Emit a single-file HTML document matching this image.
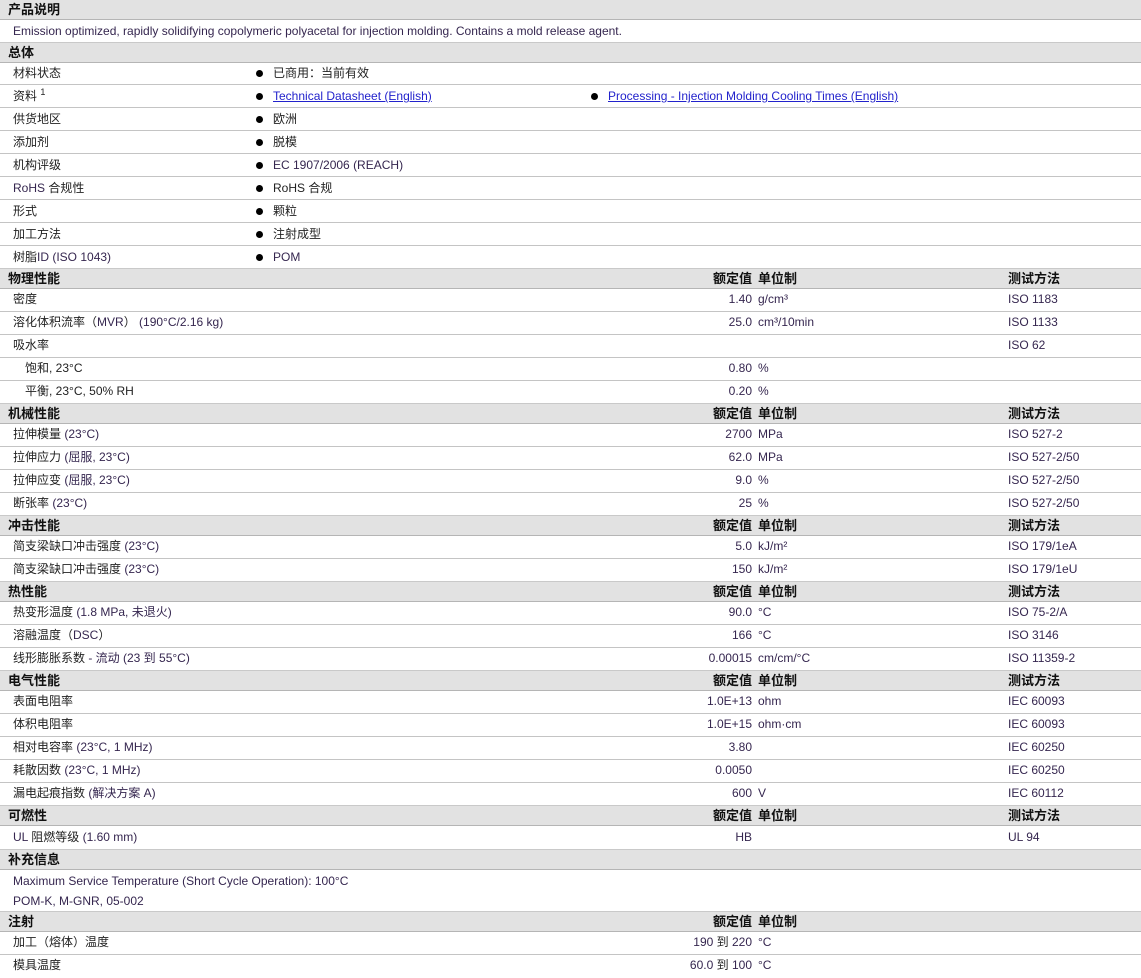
<!DOCTYPE html>
<html><head><meta charset="utf-8"><style>
*{margin:0;padding:0;box-sizing:border-box}
body{width:1141px;height:978px;background:#fff;font-family:"Liberation Sans","Noto Sans CJK SC",sans-serif;font-size:12px;color:#222;position:relative;overflow:hidden}
.row{position:absolute;left:0;width:1141px;border-bottom:1px solid #c4c4c4}
.h{background:#e2e2e2;border-top:1px solid #c9c9c9;border-bottom:1px solid #b5b5b5;font-weight:bold;font-size:13px;color:#111}
.row>span{position:absolute;white-space:nowrap;top:0}
.l{left:13px}
.hl{left:8px}
.v{right:389px;text-align:right}
.u{left:758px}
.t{left:1008px}
.bt{left:273px}
.bt2{left:608px}
.p{color:#35264f}
a{color:#2222cc;text-decoration:underline}
i.d{position:absolute;width:7px;height:7px;border-radius:50%;background:#000;left:256px}
i.d2{left:591px}
</style></head><body>
<div class="row h" style="top:-1px;height:21px;line-height:19px"><span class="hl">产品说明</span></div>
<div class="row" style="top:20px;height:23px;line-height:22px"><span class="l p">Emission optimized, rapidly solidifying copolymeric polyacetal for injection molding. Contains a mold release agent.</span></div>
<div class="row h" style="top:42px;height:21px;line-height:19px"><span class="hl">总体</span></div>

<div class="row" style="top:62px;height:23px;line-height:22px"><span class="l">材料状态</span><i class="d" style="top:8px"></i><span class="bt">已商用：当前有效</span></div>
<div class="row" style="top:85px;height:23px;line-height:22px"><span class="l">资料 <sup style="font-size:9px;line-height:0">1</sup></span><i class="d" style="top:8px"></i><span class="bt"><a>Technical Datasheet (English)</a></span><i class="d d2" style="top:8px"></i><span class="bt2"><a>Processing - Injection Molding Cooling Times (English)</a></span></div>
<div class="row" style="top:108px;height:23px;line-height:22px"><span class="l">供货地区</span><i class="d" style="top:8px"></i><span class="bt">欧洲</span></div>
<div class="row" style="top:131px;height:23px;line-height:22px"><span class="l">添加剂</span><i class="d" style="top:8px"></i><span class="bt">脱模</span></div>
<div class="row" style="top:154px;height:23px;line-height:22px"><span class="l">机构评级</span><i class="d" style="top:8px"></i><span class="bt p">EC 1907/2006 (REACH)</span></div>
<div class="row" style="top:177px;height:23px;line-height:22px"><span class="l"><span class="p">RoHS</span> 合规性</span><i class="d" style="top:8px"></i><span class="bt">RoHS 合规</span></div>
<div class="row" style="top:200px;height:23px;line-height:22px"><span class="l">形式</span><i class="d" style="top:8px"></i><span class="bt">颗粒</span></div>
<div class="row" style="top:223px;height:23px;line-height:22px"><span class="l">加工方法</span><i class="d" style="top:8px"></i><span class="bt">注射成型</span></div>
<div class="row" style="top:246px;height:23px;line-height:22px"><span class="l">树脂<span class="p">ID (ISO 1043)</span></span><i class="d" style="top:8px"></i><span class="bt p">POM</span></div>

<div class="row h" style="top:268px;height:21px;line-height:19px"><span class="hl">物理性能</span><span class="v">额定值</span><span class="u">单位制</span><span class="t">测试方法</span></div>
<div class="row" style="top:288px;height:24px;line-height:23px"><span class="l">密度</span><span class="v p">1.40</span><span class="u p">g/cm³</span><span class="t p">ISO 1183</span></div>
<div class="row" style="top:311px;height:24px;line-height:23px"><span class="l">溶化体积流率（<span class="p">MVR</span>） <span class="p">(190°C/2.16 kg)</span></span><span class="v p">25.0</span><span class="u p">cm³/10min</span><span class="t p">ISO 1133</span></div>
<div class="row" style="top:334px;height:24px;line-height:23px"><span class="l">吸水率</span><span class="t p">ISO 62</span></div>
<div class="row" style="top:357px;height:24px;line-height:23px"><span class="l" style="left:25px">饱和, 23°C</span><span class="v p">0.80</span><span class="u p">%</span></div>
<div class="row" style="top:380px;height:24px;line-height:23px"><span class="l" style="left:25px">平衡, 23°C, 50% RH</span><span class="v p">0.20</span><span class="u p">%</span></div>

<div class="row h" style="top:403px;height:21px;line-height:19px"><span class="hl">机械性能</span><span class="v">额定值</span><span class="u">单位制</span><span class="t">测试方法</span></div>
<div class="row" style="top:423px;height:24px;line-height:23px"><span class="l">拉伸模量 <span class="p">(23°C)</span></span><span class="v p">2700</span><span class="u p">MPa</span><span class="t p">ISO 527-2</span></div>
<div class="row" style="top:446px;height:24px;line-height:23px"><span class="l">拉伸应力 <span class="p">(屈服, 23°C)</span></span><span class="v p">62.0</span><span class="u p">MPa</span><span class="t p">ISO 527-2/50</span></div>
<div class="row" style="top:469px;height:24px;line-height:23px"><span class="l">拉伸应变 <span class="p">(屈服, 23°C)</span></span><span class="v p">9.0</span><span class="u p">%</span><span class="t p">ISO 527-2/50</span></div>
<div class="row" style="top:492px;height:24px;line-height:23px"><span class="l">断张率 <span class="p">(23°C)</span></span><span class="v p">25</span><span class="u p">%</span><span class="t p">ISO 527-2/50</span></div>

<div class="row h" style="top:515px;height:21px;line-height:19px"><span class="hl">冲击性能</span><span class="v">额定值</span><span class="u">单位制</span><span class="t">测试方法</span></div>
<div class="row" style="top:535px;height:24px;line-height:23px"><span class="l">简支梁缺口冲击强度 <span class="p">(23°C)</span></span><span class="v p">5.0</span><span class="u p">kJ/m²</span><span class="t p">ISO 179/1eA</span></div>
<div class="row" style="top:558px;height:24px;line-height:23px"><span class="l">简支梁缺口冲击强度 <span class="p">(23°C)</span></span><span class="v p">150</span><span class="u p">kJ/m²</span><span class="t p">ISO 179/1eU</span></div>

<div class="row h" style="top:581px;height:21px;line-height:19px"><span class="hl">热性能</span><span class="v">额定值</span><span class="u">单位制</span><span class="t">测试方法</span></div>
<div class="row" style="top:601px;height:24px;line-height:23px"><span class="l">热变形温度 <span class="p">(1.8 MPa, 未退火)</span></span><span class="v p">90.0</span><span class="u p">°C</span><span class="t p">ISO 75-2/A</span></div>
<div class="row" style="top:624px;height:24px;line-height:23px"><span class="l">溶融温度（<span class="p">DSC</span>）</span><span class="v p">166</span><span class="u p">°C</span><span class="t p">ISO 3146</span></div>
<div class="row" style="top:647px;height:24px;line-height:23px"><span class="l">线形膨胀系数 <span class="p">- 流动 (23 到 55°C)</span></span><span class="v p">0.00015</span><span class="u p">cm/cm/°C</span><span class="t p">ISO 11359-2</span></div>

<div class="row h" style="top:670px;height:21px;line-height:19px"><span class="hl">电气性能</span><span class="v">额定值</span><span class="u">单位制</span><span class="t">测试方法</span></div>
<div class="row" style="top:690px;height:24px;line-height:23px"><span class="l">表面电阻率</span><span class="v p">1.0E+13</span><span class="u p">ohm</span><span class="t p">IEC 60093</span></div>
<div class="row" style="top:713px;height:24px;line-height:23px"><span class="l">体积电阻率</span><span class="v p">1.0E+15</span><span class="u p">ohm·cm</span><span class="t p">IEC 60093</span></div>
<div class="row" style="top:736px;height:24px;line-height:23px"><span class="l">相对电容率 <span class="p">(23°C, 1 MHz)</span></span><span class="v p">3.80</span><span class="t p">IEC 60250</span></div>
<div class="row" style="top:759px;height:24px;line-height:23px"><span class="l">耗散因数 <span class="p">(23°C, 1 MHz)</span></span><span class="v p">0.0050</span><span class="t p">IEC 60250</span></div>
<div class="row" style="top:782px;height:24px;line-height:23px"><span class="l">漏电起痕指数 <span class="p">(解决方案 A)</span></span><span class="v p">600</span><span class="u p">V</span><span class="t p">IEC 60112</span></div>

<div class="row h" style="top:805px;height:21px;line-height:19px"><span class="hl">可燃性</span><span class="v">额定值</span><span class="u">单位制</span><span class="t">测试方法</span></div>
<div class="row" style="top:825px;height:25px;line-height:24px"><span class="l"><span class="p">UL</span> 阻燃等级 <span class="p">(1.60 mm)</span></span><span class="v p">HB</span><span class="t p">UL 94</span></div>

<div class="row h" style="top:849px;height:21px;line-height:19px"><span class="hl">补充信息</span></div>
<div class="row" style="top:869px;height:43px;line-height:20px"><span class="l p" style="top:2px">Maximum Service Temperature (Short Cycle Operation): 100°C</span><span class="l p" style="top:22px">POM-K, M-GNR, 05-002</span></div>

<div class="row h" style="top:911px;height:21px;line-height:19px"><span class="hl">注射</span><span class="v">额定值</span><span class="u">单位制</span></div>
<div class="row" style="top:931px;height:24px;line-height:23px"><span class="l">加工（熔体）温度</span><span class="v p">190 <span style="color:#222">到</span> 220</span><span class="u p">°C</span></div>
<div class="row" style="top:954px;height:24px;line-height:23px;border-bottom:none"><span class="l">模具温度</span><span class="v p">60.0 <span style="color:#222">到</span> 100</span><span class="u p">°C</span></div>
</body></html>
